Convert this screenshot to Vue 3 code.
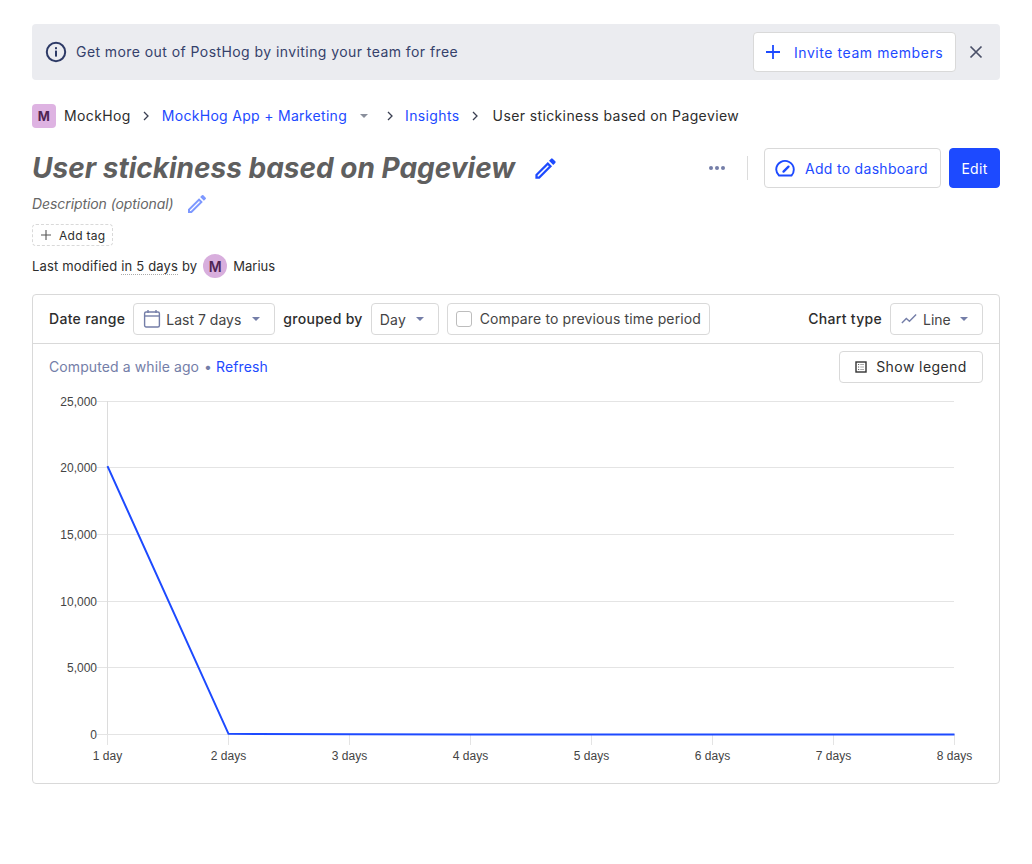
<template>
  <div class="page">
    <!-- invite banner -->
    <div class="banner">
      <div class="banner-msg">
        <svg class="info-icon" width="22" height="22" viewBox="0 0 22 22" fill="none">
          <circle cx="11" cy="11" r="9.2" stroke="#2d3a66" stroke-width="2" />
          <rect x="10" y="9.6" width="2" height="6" fill="#2d3a66" />
          <rect x="10" y="6.2" width="2" height="2" fill="#2d3a66" />
        </svg>
        <span>Get more out of PostHog by inviting your team for free</span>
      </div>
      <button class="btn invite-btn">
        <svg width="16" height="16" viewBox="0 0 16 16"><path d="M8 1v14M1 8h14" stroke="#1d4aff" stroke-width="1.8" /></svg>
        <span>Invite team members</span>
      </button>
      <svg class="close-icon" width="14" height="14" viewBox="0 0 14 14"><path d="M1.5 1.5l11 11M12.5 1.5l-11 11" stroke="#4a5068" stroke-width="1.7" /></svg>
    </div>

    <!-- breadcrumbs -->
    <div class="crumbs">
      <span class="org-icon">M</span>
      <span class="crumb">MockHog</span>
      <svg class="chev first" width="6" height="10" viewBox="0 0 6 10"><path d="M1 1l4 4-4 4" fill="none" stroke="#3a3f52" stroke-width="1.3" /></svg>
      <a class="crumb link project">MockHog App + Marketing</a>
      <span class="caret small"></span>
      <svg class="chev second" width="6" height="10" viewBox="0 0 6 10"><path d="M1 1l4 4-4 4" fill="none" stroke="#3a3f52" stroke-width="1.3" /></svg>
      <a class="crumb link">Insights</a>
      <svg class="chev third" width="6" height="10" viewBox="0 0 6 10"><path d="M1 1l4 4-4 4" fill="none" stroke="#3a3f52" stroke-width="1.3" /></svg>
      <span class="crumb">User stickiness based on Pageview</span>
    </div>

    <!-- title row -->
    <div class="title-row">
      <div class="title-left">
        <h1>User stickiness based on Pageview</h1>
        <svg width="27" height="27" viewBox="0 0 24 24"><path d="M3 17.25V21h3.75L17.81 9.94l-3.75-3.75L3 17.25zM5.92 19H5v-.92l9.06-9.06.92.92L5.92 19zM20.71 7.04a1 1 0 000-1.41l-2.34-2.34a1 1 0 00-1.41 0l-1.83 1.83 3.75 3.75 1.83-1.83z" fill="#1d4aff" /></svg>
      </div>
      <div class="title-actions">
        <span class="dots"><i></i><i></i><i></i></span>
        <span class="vsep"></span>
        <button class="btn dash-btn">
          <svg width="20" height="18" viewBox="0 0 20 18" fill="none">
            <path d="M4 16.5h12.5a8.6 8.6 0 002.3-6A8.7 8.7 0 0014.2 3a8.8 8.8 0 00-13 7.5 8.6 8.6 0 002.8 6z" stroke="#1d4aff" stroke-width="1.9" />
            <path d="M8.5 12.6l5-5" stroke="#1d4aff" stroke-width="2.3" stroke-linecap="round" />
          </svg>
          <span>Add to dashboard</span>
        </button>
        <button class="btn edit-btn">Edit</button>
      </div>
    </div>

    <div class="desc">
      <span>Description (optional)</span>
      <svg width="24" height="24" viewBox="0 0 24 24"><path d="M3 17.25V21h3.75L17.81 9.94l-3.75-3.75L3 17.25zM5.92 19H5v-.92l9.06-9.06.92.92L5.92 19zM20.71 7.04a1 1 0 000-1.41l-2.34-2.34a1 1 0 00-1.41 0l-1.83 1.83 3.75 3.75 1.83-1.83z" fill="#7d98ff" /></svg>
    </div>

    <div class="tag-btn">
      <svg width="10" height="10" viewBox="0 0 10 10"><path d="M5 0v10M0 5h10" stroke="#555" stroke-width="1.1" /></svg>
      <span>Add tag</span>
    </div>

    <div class="modified">
      <span>Last modified <span class="dotted">in 5 days</span> by</span>
      <span class="avatar">M</span>
      <span class="author">Marius</span>
    </div>

    <!-- insight card -->
    <div class="card">
      <div class="filters">
        <div class="filters-left">
          <span class="label">Date range</span>
          <div class="select date">
            <svg width="18" height="20" viewBox="0 0 18 20" fill="none">
              <rect x="1.6" y="3" width="14.8" height="15" rx="1.5" stroke="#747ea8" stroke-width="1.4" />
              <path d="M1.6 7h14.8" stroke="#747ea8" stroke-width="1.4" />
              <path d="M5 1v3M13 1v3" stroke="#747ea8" stroke-width="1.4" />
            </svg>
            <span>Last 7 days</span>
            <span class="caret"></span>
          </div>
          <span class="label">grouped by</span>
          <div class="select day">
            <span>Day</span>
            <span class="caret"></span>
          </div>
          <div class="select compare">
            <span class="checkbox"></span>
            <span class="compare-text">Compare to previous time period</span>
          </div>
        </div>
        <div class="filters-right">
          <span class="label">Chart type</span>
          <div class="select type">
            <svg width="16" height="12" viewBox="0 0 18 12" fill="none"><path d="M1 10.5l5-5 3.5 3L17 1" stroke="#747ea8" stroke-width="1.6" /></svg>
            <span>Line</span>
            <span class="caret"></span>
          </div>
        </div>
      </div>

      <div class="computed-row">
        <div class="computed">
          <span>Computed a while ago</span>
          <span class="bullet">•</span>
          <a class="link">Refresh</a>
        </div>
        <button class="btn legend-btn">
          <svg width="12" height="12" viewBox="0 0 12 12" fill="none">
            <rect x="1" y="1" width="10" height="10" stroke="#333" stroke-width="1.4" />
            <path d="M3 3.5h1.2M3 6h1.2M3 8.5h1.2" stroke="#666" />
            <path d="M5.2 3.5H9M5.2 6H9M5.2 8.5H9" stroke="#aaa" />
          </svg>
          <span>Show legend</span>
        </button>
      </div>

      <svg class="chart" width="966" height="385" viewBox="0 0 966 385">
        <g v-for="t in yTicks" :key="t.label">
          <line x1="64" :x2="921" :y1="t.y" :y2="t.y" stroke="#e4e4e4" />
          <text x="64" :y="t.y + 4" text-anchor="end" class="axis-text">{{ t.label }}</text>
        </g>
        <line x1="74.5" x2="74.5" y1="7" y2="351" stroke="#dcdcdc" />
        <g v-for="t in xTicks" :key="t.label">
          <line :x1="t.x" :x2="t.x" y1="340" y2="351" stroke="#e4e4e4" />
          <text :x="t.x" y="366" text-anchor="middle" class="axis-text">{{ t.label }}</text>
        </g>
        <polyline :points="linePoints" fill="none" stroke="#1d4aff" stroke-width="2" />
      </svg>
    </div>
  </div>
</template>

<script setup>
import { computed } from 'vue';

// chart geometry, relative to the svg box
const yTicks = [
  { label: '25,000', y: 7.5 },
  { label: '20,000', y: 73.5 },
  { label: '15,000', y: 140.5 },
  { label: '10,000', y: 207.5 },
  { label: '5,000', y: 273.5 },
  { label: '0', y: 340.5 },
];

const labels = ['1 day', '2 days', '3 days', '4 days', '5 days', '6 days', '7 days', '8 days'];
const xTicks = labels.map((label, i) => ({ label, x: 74.5 + i * 121 }));

const values = [20150, 50, 10, 5, 5, 5, 5, 5];
const linePoints = computed(() =>
  values.map((v, i) => `${74.5 + i * 121},${340.5 - (v / 25000) * 333}`).join(' ')
);
</script>

<style>
html,
body {
  background: #fff;
}
</style>

<style scoped>
.page {
  box-sizing: border-box;
  width: 1032px;
  padding: 24px 32px 0;
  font-family: Inter, "Liberation Sans", sans-serif;
  font-size: 14px;
  color: #2d2d2d;
}

.link {
  color: #1d4aff;
}

.btn {
  display: flex;
  align-items: center;
  box-sizing: border-box;
  border: 1px solid #d9d9d9;
  border-radius: 4px;
  background: #fff;
  font-family: inherit;
  font-size: 14px;
  letter-spacing: 0.3px;
  padding: 0;
}

/* banner */
.banner {
  display: flex;
  align-items: center;
  height: 56px;
  background: #ebecf0;
  border-radius: 4px;
  padding: 0 17px 0 13px;
}
.banner-msg {
  flex: 1;
  display: flex;
  align-items: center;
  gap: 9px;
  color: #35416b;
  letter-spacing: 0.43px;
}
.banner-msg span {
  position: relative;
  top: -1px;
}
.invite-btn {
  width: 203px;
  height: 40px;
  padding-left: 11px;
  gap: 13px;
  color: #1d4aff;
  letter-spacing: 0.56px;
}
.close-icon {
  margin-left: 13px;
}

/* breadcrumbs */
.crumbs {
  display: flex;
  align-items: center;
  height: 24px;
  margin-top: 24px;
  letter-spacing: 0.38px;
}
.crumb {
  position: relative;
  top: -1px;
}
.crumb.project {
  letter-spacing: 0.3px;
}
.org-icon {
  width: 24px;
  height: 24px;
  border-radius: 4px;
  background: #deb3e2;
  color: #4f2454;
  font-weight: 700;
  font-size: 13px;
  display: flex;
  align-items: center;
  justify-content: center;
  margin-right: 8px;
}
.chev {
  margin: 0 14px 0 12px;
}
.chev.first {
  margin-right: 13px;
}
.chev.second {
  margin-right: 12px;
}
.chev.third {
  margin-right: 15px;
}
.caret {
  display: inline-block;
  width: 0;
  height: 0;
  border-left: 4px solid transparent;
  border-right: 4px solid transparent;
  border-top: 4px solid #747ea8;
}
.caret.small {
  border-top-color: #8a8f9c;
  margin-left: 13px;
  margin-right: 7px;
}

/* title */
.title-row {
  display: flex;
  align-items: center;
  justify-content: space-between;
  height: 40px;
  margin-top: 20px;
}
.title-left {
  display: flex;
  align-items: center;
  gap: 17px;
}
h1 {
  margin: 0;
  font-size: 28px;
  font-weight: 700;
  font-style: italic;
  color: #5f5f5f;
  line-height: 40px;
}
.title-actions {
  display: flex;
  align-items: center;
}
.dots {
  display: flex;
  gap: 2px;
  margin-right: 22px;
}
.dots i {
  width: 4px;
  height: 4px;
  border-radius: 50%;
  background: #747ea8;
}
.vsep {
  width: 1px;
  height: 24px;
  background: #dcdcdc;
  margin-right: 16px;
}
.dash-btn {
  width: 177px;
  height: 40px;
  padding-left: 10px;
  gap: 10px;
  color: #1d4aff;
}
.edit-btn {
  justify-content: center;
  width: 51px;
  height: 40px;
  margin-left: 8px;
  background: #1d4aff;
  border-color: #1d4aff;
  color: #fff;
}

.desc {
  display: flex;
  align-items: center;
  gap: 11px;
  height: 24px;
  margin-top: 4px;
  font-style: italic;
  color: #666;
  letter-spacing: -0.08px;
}
.desc span {
  position: relative;
  top: -1px;
}

.tag-btn {
  display: flex;
  align-items: center;
  gap: 8px;
  box-sizing: border-box;
  width: 81px;
  height: 22px;
  margin-top: 8px;
  padding-left: 8px;
  border: 1px dashed #d9d9d9;
  border-radius: 4px;
  font-size: 12px;
  letter-spacing: 0.3px;
}

.modified {
  display: flex;
  align-items: center;
  height: 24px;
  margin-top: 8px;
  font-size: 13px;
  letter-spacing: 0.17px;
}
.dotted {
  border-bottom: 1px dotted #aaa;
}
.avatar {
  width: 24px;
  height: 24px;
  border-radius: 50%;
  background: #d8aedd;
  color: #4f2454;
  font-weight: 600;
  font-size: 14px;
  display: flex;
  align-items: center;
  justify-content: center;
  margin: 0 6px 0 6px;
}
.author {
  letter-spacing: 0;
}

/* card */
.card {
  box-sizing: border-box;
  height: 490px;
  margin-top: 16px;
  border: 1px solid #d9d9d9;
  border-radius: 4px;
}
.filters {
  display: flex;
  align-items: center;
  justify-content: space-between;
  box-sizing: border-box;
  height: 49px;
  padding: 0 16px;
  border-bottom: 1px solid #d9d9d9;
  letter-spacing: 0.3px;
}
.filters-left,
.filters-right {
  display: flex;
  align-items: center;
  gap: 8px;
}
.label {
  font-weight: 500;
  position: relative;
  top: -1px;
}
.select {
  display: flex;
  align-items: center;
  box-sizing: border-box;
  height: 32px;
  border: 1px solid #d9d9d9;
  border-radius: 4px;
  padding: 0 14px 0 8px;
  color: #444;
  white-space: nowrap;
  letter-spacing: 0;
}
.select .caret {
  margin-left: auto;
}
.select.date {
  width: 142px;
  padding-left: 9px;
  gap: 5px;
}
.select.day {
  width: 68px;
  letter-spacing: 0.3px;
}
.select.compare {
  gap: 8px;
  padding-right: 8px;
  letter-spacing: 0.14px;
}
.compare-text {
  position: relative;
  top: -1px;
}
.select.type {
  width: 93px;
  padding-left: 10px;
  gap: 6px;
}
.checkbox {
  box-sizing: border-box;
  width: 16px;
  height: 16px;
  border: 1px solid #bdbdbd;
  border-radius: 3px;
}

.computed-row {
  display: flex;
  align-items: center;
  justify-content: space-between;
  height: 46px;
  padding: 0 16px;
  letter-spacing: 0.1px;
}
.computed {
  color: #747ea8;
  position: relative;
  top: -1px;
}
.bullet {
  margin: 0 4px 0 5px;
}
.legend-btn {
  justify-content: center;
  gap: 9px;
  width: 144px;
  height: 32px;
  padding-bottom: 1px;
  color: #2d2d2d;
  letter-spacing: 0.42px;
}

.chart {
  display: block;
  margin-top: 4px;
  overflow: hidden;
}
.axis-text {
  font-family: "Liberation Sans", Arial, sans-serif;
  font-size: 12px;
  fill: #444;
}
</style>
